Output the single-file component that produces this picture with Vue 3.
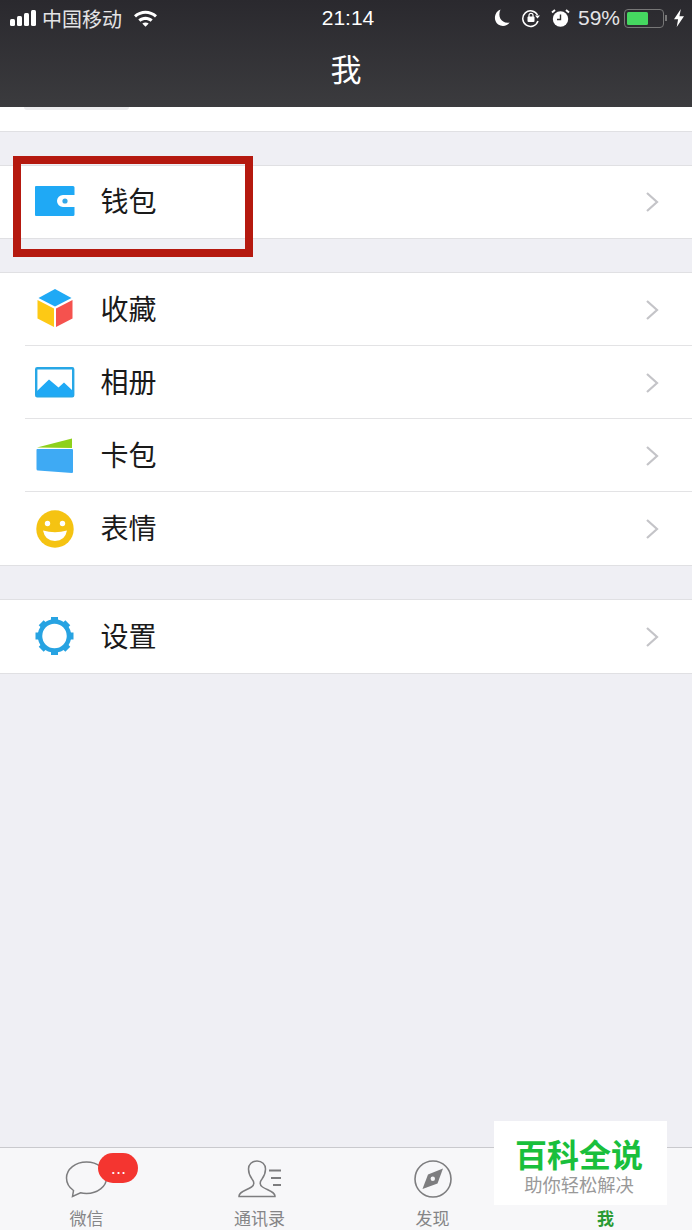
<script setup>
const tabs = [
  { key: 'chat', label: '微信' },
  { key: 'contacts', label: '通讯录' },
  { key: 'discover', label: '发现' },
  { key: 'me', label: '我', active: true },
]
const middleRows = [
  { key: 'fav', label: '收藏' },
  { key: 'album', label: '相册' },
  { key: 'cards', label: '卡包' },
  { key: 'emoji', label: '表情' },
]
</script>

<template>
  <div class="page">
    <header class="topbar">
      <div class="status">
        <div class="status-left">
          <div class="signal"><i></i><i></i><i></i><i></i></div>
          <span class="carrier">中国移动</span>
          <svg class="wifi" width="25" height="18" viewBox="0 0 25 18">
            <path d="M1 6.2C7.5 .2 17.5 .2 24 6.2l-2 2.2C16.5 3.4 8.5 3.4 3 8.4z" fill="#fff" />
            <path d="M5.3 10.6c4.2-3.7 10.2-3.7 14.4 0l-2.1 2.2c-3-2.4-7.2-2.4-10.2 0z" fill="#fff" />
            <path d="M9.3 14.6c2-1.4 4.4-1.4 6.4 0l-3.2 3.2z" fill="#fff" />
          </svg>
        </div>
        <div class="time">21:14</div>
        <div class="status-right">
          <svg width="18" height="20" viewBox="0 0 18 20">
            <path d="M7.500 1.500C4 9 9 16 16.500 14.500C14.500 18 9 19 5.200 16.500C.5 13 .5 4.500 7.500 1.500z" fill="#fff" />
          </svg>
          <svg width="20" height="20" viewBox="0 0 20 20" fill="none">
            <path d="M16.500 7A7.800 7.800 0 1 0 17 13" stroke="#fff" stroke-width="1.500" />
            <path d="M14 7.500h5l-2.500 3z" fill="#fff" />
            <rect x="6.500" y="8.500" width="7" height="5.500" rx="1" fill="#fff" />
            <path d="M8 9V7.300a2 2 0 0 1 4 0V9" stroke="#fff" stroke-width="1.200" />
          </svg>
          <svg class="alarm" width="19" height="20" viewBox="0 0 19 20" fill="none">
            <circle cx="9.500" cy="11" r="7.700" fill="#fff" />
            <path d="M9.500 6.500V11.500H6" stroke="#333" stroke-width="1.400" />
            <path d="M1 4.500L4 2M18 4.500L15 2" stroke="#fff" stroke-width="2" />
          </svg>
          <span class="percent">59%</span>
          <div class="battery"><div class="battery-fill"></div></div>
          <div class="battery-tip"></div>
          <svg class="bolt" width="10" height="20" viewBox="0 0 11 20">
            <path d="M7.500 0L0 11.500H4.500L3 20L11 8H6z" fill="#fff" />
          </svg>
        </div>
      </div>
      <div class="title">我</div>
    </header>

    <div class="cut-row"><div class="cut-thumb"></div></div>

    <section class="group">
      <div class="row short">
        <svg class="icon" width="40" height="32" viewBox="0 0 40 32">
          <path d="M1 0H38a1.500 1.500 0 0 1 1.500 1.500V9H28a6 6 0 0 0 0 12H39.500V28.500a1.500 1.500 0 0 1-1.500 1.500H1a1 1 0 0 1-1-1V1a1 1 0 0 1 1-1z" fill="#1fa9f5" />
          <circle cx="30" cy="15" r="2.600" fill="#35a8e8" />
        </svg>
        <span class="row-label">钱包</span>
        <svg class="chevron" width="14" height="22" viewBox="0 0 14 22" fill="none">
          <path d="M2 2l10 9-10 9" stroke="#c4c4c8" stroke-width="2.200" />
        </svg>
      </div>
    </section>

    <section class="group">
      <div v-for="(row, i) in middleRows" :key="row.key" class="row" :class="{ line: i < middleRows.length - 1 }">
        <svg v-if="row.key === 'fav'" class="icon cube" width="40" height="40" viewBox="0 0 40 40">
          <path d="M20 1L36.500 10L20 18.500L3.500 10z" fill="#1fa9f5" />
          <path d="M2.500 12L19 20.500V39L2.500 30.500z" fill="#fdc915" />
          <path d="M37.500 12L21 20.500V39L37.500 30.500z" fill="#f5524e" />
        </svg>
        <svg v-else-if="row.key === 'album'" class="icon" width="40" height="32" viewBox="0 0 40 32">
          <rect x="1.200" y="1.200" width="37" height="28" rx="1" fill="#fff" stroke="#27a7e6" stroke-width="2.400" />
          <path d="M2 24L14 12.500L23.500 20.500L29 15.500L38 24V29H2z" fill="#1fa9f5" />
        </svg>
        <svg v-else-if="row.key === 'cards'" class="icon" width="40" height="36" viewBox="0 0 40 36">
          <path d="M2 9.500L37 .500V10z" fill="#8ed11c" />
          <path d="M2 11H37a1 1 0 0 1 1 1V34a1 1 0 0 1-1 1L3 32.500a1.500 1.500 0 0 1-1.500-1.500V12a1 1 0 0 1 .5-1z" fill="#3eaaf4" />
        </svg>
        <svg v-else-if="row.key === 'emoji'" class="icon" width="40" height="40" viewBox="0 0 40 40">
          <circle cx="20" cy="20" r="18.700" fill="#f5c312" />
          <circle cx="12.500" cy="14.500" r="2.700" fill="#fff" />
          <circle cx="27.500" cy="14.500" r="2.700" fill="#fff" />
          <path d="M8 21.500Q20 25 32 21.500Q30 32 20 32Q10 32 8 21.500z" fill="#fff" />
        </svg>
        <span class="row-label">{{ row.label }}</span>
        <svg class="chevron" width="14" height="22" viewBox="0 0 14 22" fill="none">
          <path d="M2 2l10 9-10 9" stroke="#c4c4c8" stroke-width="2.200" />
        </svg>
      </div>
    </section>

    <section class="group">
      <div class="row">
        <svg class="icon gear" width="40" height="40" viewBox="0 0 40 40" fill="none">
          <circle cx="19.500" cy="20" r="14.500" stroke="#27a3e2" stroke-width="4.500" />
          <path d="M19.500 1V6M19.500 34v5M.5 20H5.500M33.500 20H38.500M6.200 6.700l3.500 3.500M29.300 29.800l3.500 3.500M32.800 6.700L29.300 10.200M9.700 29.800L6.200 33.300" stroke="#27a3e2" stroke-width="7" />
        </svg>
        <span class="row-label">设置</span>
        <svg class="chevron" width="14" height="22" viewBox="0 0 14 22" fill="none">
          <path d="M2 2l10 9-10 9" stroke="#c4c4c8" stroke-width="2.200" />
        </svg>
      </div>
    </section>

    <nav class="tabbar">
      <div v-for="tab in tabs" :key="tab.key" class="tab" :class="{ active: tab.active }">
        <div class="tab-icon">
          <template v-if="tab.key === 'chat'">
            <svg width="44" height="38" viewBox="0 0 44 38" fill="none">
              <path d="M21.500 2C10.500 2 1.500 9 1.500 18C1.500 23 4.200 27.500 8.500 30.500L7.500 36.500L15.500 32.800C17.300 33.300 19.400 33.500 21.500 33.500C32.500 33.500 41.500 26.500 41.500 18C41.500 9 32.500 2 21.500 2z" stroke="#7d7d7f" stroke-width="1.500" />
            </svg>
            <span class="badge">...</span>
          </template>
          <svg v-else-if="tab.key === 'contacts'" width="46" height="38" viewBox="0 0 46 38" fill="none" stroke="#7d7d7f" stroke-width="1.500">
            <path d="M2 36.500C1.500 32 9 30.500 14.500 27C17.500 25 17.500 22 15 19C12 15 11.500 12 11.500 9C11.500 4.500 15 1 20 1C25 1 28.500 4.500 28.500 9C28.500 12 28 15 25 19C22.500 22 22.500 25 25.500 27C31 30.500 38.500 32 38 36.500z" />
            <path d="M32 10.500H44M34 18H44M36 25H44" stroke-width="2" />
          </svg>
          <svg v-else-if="tab.key === 'discover'" width="40" height="40" viewBox="0 0 40 40" fill="none">
            <circle cx="20" cy="20" r="18" stroke="#7d7d7f" stroke-width="1.600" />
            <path d="M30 9.500L24.500 24.500L9.500 30L15 15.500z" fill="#7d7d7f" />
            <circle cx="19.800" cy="19.800" r="2.200" fill="#f5f5f7" />
          </svg>
        </div>
        <span class="tab-label">{{ tab.label }}</span>
      </div>
    </nav>

    <div class="mark-frame"></div>
    <div class="watermark">
      <div class="wm-title">百科全说</div>
      <div class="wm-sub">助你轻松解决</div>
    </div>
  </div>
</template>

<style scoped>
.page {
  position: relative;
  width: 692px;
  height: 1230px;
  overflow: hidden;
  display: flex;
  flex-direction: column;
  background: #efeff4;
  font-family: "Noto Sans CJK SC", "Liberation Sans", sans-serif;
}

.topbar {
  height: 107px;
  flex: none;
  background: linear-gradient(180deg, #2a292e 0%, #3b3b3e 100%);
  color: #fff;
}

.status {
  height: 36px;
  display: grid;
  grid-template-columns: 1fr auto 1fr;
  align-items: center;
  padding: 0 8px 0 10px;
}

.status-left,
.status-right {
  display: flex;
  align-items: center;
}

.status-right {
  justify-content: flex-end;
  gap: 10px;
}

.signal {
  display: flex;
  align-items: flex-end;
  gap: 2px;
  height: 16px;
}

.signal i {
  width: 5px;
  border-radius: 1.500px;
  background: #fff;
}

.signal i:nth-child(1) { height: 7px; }
.signal i:nth-child(2) { height: 10px; }
.signal i:nth-child(3) { height: 13px; }
.signal i:nth-child(4) { height: 16px; }

.carrier {
  margin-left: 6px;
  font-size: 20px;
  color: #e4e4e6;
}

.wifi {
  margin-left: 11px;
}

.time {
  font-family: "Liberation Sans", sans-serif;
  font-size: 21px;
  margin-left: 2px;
}

.alarm {
  margin-right: -2px;
}

.percent {
  font-family: "Liberation Sans", sans-serif;
  font-size: 21px;
  color: #e4e4e6;
}

.battery {
  width: 40px;
  height: 19px;
  margin-left: -6px;
  border: 1.500px solid #777;
  border-radius: 4px;
  padding: 2px;
  box-sizing: border-box;
}

.battery-fill {
  width: 21px;
  height: 100%;
  border-radius: 1.500px;
  background: #45d760;
}

.battery-tip {
  width: 2px;
  height: 6px;
  margin-left: -9px;
  background: #777;
}

.bolt {
  margin-left: -3px;
}

.title {
  text-align: center;
  font-size: 31px;
  line-height: 44px;
  margin-top: 10px;
}

.cut-row {
  height: 25px;
  box-sizing: border-box;
  flex: none;
  background: #fff;
  border-bottom: 1px solid #e0e0e3;
}

.cut-thumb {
  width: 105px;
  height: 3px;
  margin-left: 24px;
  border-radius: 0 0 3px 3px;
  background: #ececee;
}

.group {
  margin-top: 33px;
  flex: none;
  background: #fff;
  border-top: 1px solid #e0e0e3;
  border-bottom: 1px solid #e0e0e3;
}

.row {
  position: relative;
  display: flex;
  align-items: center;
  height: 73px;
  padding-left: 35px;
  padding-right: 33px;
}

.row.short {
  height: 72px;
}

.row.line::after {
  content: "";
  position: absolute;
  left: 25px;
  right: 0;
  bottom: 0;
  height: 1px;
  background: #e3e3e5;
}

.icon {
  flex: none;
}

.icon.cube {
  margin-top: -4px;
}

.icon.gear {
  margin-top: -2px;
}

.row-label {
  position: absolute;
  left: 100.500px;
  top: 50%;
  transform: translateY(-50%);
  margin-top: -2px;
  font-size: 28px;
  color: #1a1a1a;
}

.chevron {
  margin-left: auto;
}

.tabbar {
  margin-top: auto;
  height: 83px;
  flex: none;
  display: grid;
  grid-template-columns: repeat(4, 173px);
  box-sizing: border-box;
  background: #f7f7f9;
  border-top: 1px solid #c9c9cd;
}

.tab {
  display: flex;
  flex-direction: column;
  align-items: center;
  color: #858587;
}

.tab-icon {
  position: relative;
  height: 38px;
  margin-top: 12px;
  display: flex;
  align-items: center;
}

.tab-label {
  margin-top: 8px;
  font-size: 17px;
  line-height: 24px;
}

.tab.active {
  color: #2a9a33;
  font-weight: 700;
}

.badge {
  position: absolute;
  left: 33px;
  top: -7px;
  width: 40px;
  height: 30px;
  box-sizing: border-box;
  padding-left: 3px;
  border-radius: 15px;
  background: #f43530;
  color: #fff;
  text-align: center;
  font-size: 15px;
  line-height: 29px;
  font-weight: 400;
  letter-spacing: 1px;
}

.mark-frame {
  position: absolute;
  left: 13px;
  top: 156px;
  width: 240px;
  height: 101px;
  box-sizing: border-box;
  border: 8px solid #b5190f;
}

.watermark {
  position: absolute;
  left: 494px;
  top: 1121px;
  width: 173px;
  height: 84px;
  box-sizing: border-box;
  padding-right: 3px;
  background: #fff;
  text-align: center;
}

.wm-title {
  margin-top: 15px;
  font-size: 32px;
  line-height: 34px;
  font-weight: 700;
  color: #19bf3c;
}

.wm-sub {
  font-size: 18.300px;
  line-height: 28px;
  color: #999;
}
</style>
